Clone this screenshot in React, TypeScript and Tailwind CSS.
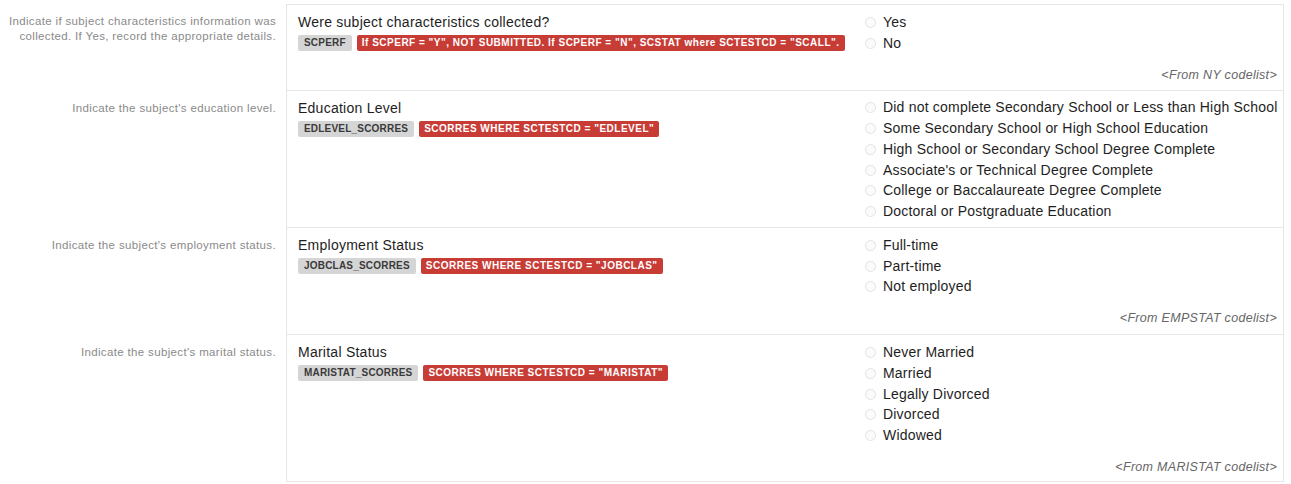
import React from "react";

type Row = {
  label: string[];
  title: string;
  code: string;
  rule: string;
  options: string[];
  codelist?: string;
  pb: string;
};

const rows: Row[] = [
  {
    label: ["Indicate if subject characteristics information was", "collected. If Yes, record the appropriate details."],
    title: "Were subject characteristics collected?",
    code: "SCPERF",
    rule: 'If SCPERF = "Y", NOT SUBMITTED. If SCPERF = "N", SCSTAT where SCTESTCD = "SCALL".',
    options: ["Yes", "No"],
    codelist: "<From NY codelist>",
    pb: "pb-[7px] border-t",
  },
  {
    label: ["Indicate the subject's education level."],
    title: "Education Level",
    code: "EDLEVEL_SCORRES",
    rule: 'SCORRES WHERE SCTESTCD = "EDLEVEL"',
    options: [
      "Did not complete Secondary School or Less than High School",
      "Some Secondary School or High School Education",
      "High School or Secondary School Degree Complete",
      "Associate's or Technical Degree Complete",
      "College or Baccalaureate Degree Complete",
      "Doctoral or Postgraduate Education",
    ],
    pb: "pb-[5px]",
  },
  {
    label: ["Indicate the subject's employment status."],
    title: "Employment Status",
    code: "JOBCLAS_SCORRES",
    rule: 'SCORRES WHERE SCTESTCD = "JOBCLAS"',
    options: ["Full-time", "Part-time", "Not employed"],
    codelist: "<From EMPSTAT codelist>",
    pb: "pb-[8px]",
  },
  {
    label: ["Indicate the subject's marital status."],
    title: "Marital Status",
    code: "MARISTAT_SCORRES",
    rule: 'SCORRES WHERE SCTESTCD = "MARISTAT"',
    options: ["Never Married", "Married", "Legally Divorced", "Divorced", "Widowed"],
    codelist: "<From MARISTAT codelist>",
    pb: "pb-[6px]",
  },
];

export default function App() {
  return (
    <div className="w-[1291px] h-[484px] bg-white pt-[4px] font-['Liberation_Sans',Arial,sans-serif] overflow-hidden">
      {rows.map((r, i) => (
        <div key={i} className="flex">
          <div className="w-[286px] shrink-0 pr-[10px] pt-[10px] text-right text-[11.5px] leading-[15px] tracking-[0.35px] text-[#8a8a8a] whitespace-nowrap">
            {r.label.map((l, j) => (
              <div key={j}>{l}</div>
            ))}
          </div>
          <div
            className={`w-[998px] shrink-0 flex border-l border-r border-b border-[#e6e6e6] pt-[7px] ${r.pb}`}
          >
            <div className="w-[580px] shrink-0 pl-[11px]">
              <div className="text-[14px] leading-[20px] tracking-[0.25px] text-[#1e1e1e]">{r.title}</div>
              <div className="mt-[3px] flex gap-[5px]">
                <span className="h-[16px] px-[6px] rounded-[2px] bg-[#d5d5d5] text-[#3a3a3a] text-[10px] font-bold leading-[16px] tracking-[0.2px]">
                  {r.code}
                </span>
                <span className="h-[16px] px-[5px] rounded-[2px] bg-[#c83c36] text-white text-[10px] font-bold leading-[16px] tracking-[0.5px] whitespace-nowrap">
                  {r.rule}
                </span>
              </div>
            </div>
            <div className="flex-1 flex flex-col">
              {r.options.map((o, k) => (
                <div key={k} className="flex items-center h-[20.75px]">
                  <span className="w-[11px] h-[11px] rounded-full border border-[#e2e2e2] bg-[#fbfbfb] mr-[7px] -ml-[2px]" />
                  <span className="text-[14px] tracking-[0.2px] text-[#1e1e1e] whitespace-nowrap">{o}</span>
                </div>
              ))}
              {r.codelist && (
                <div className="mt-[13px] pr-[6px] text-right italic text-[12.5px] leading-[16px] tracking-[0.3px] text-[#666]">
                  {r.codelist}
                </div>
              )}
            </div>
          </div>
        </div>
      ))}
    </div>
  );
}
